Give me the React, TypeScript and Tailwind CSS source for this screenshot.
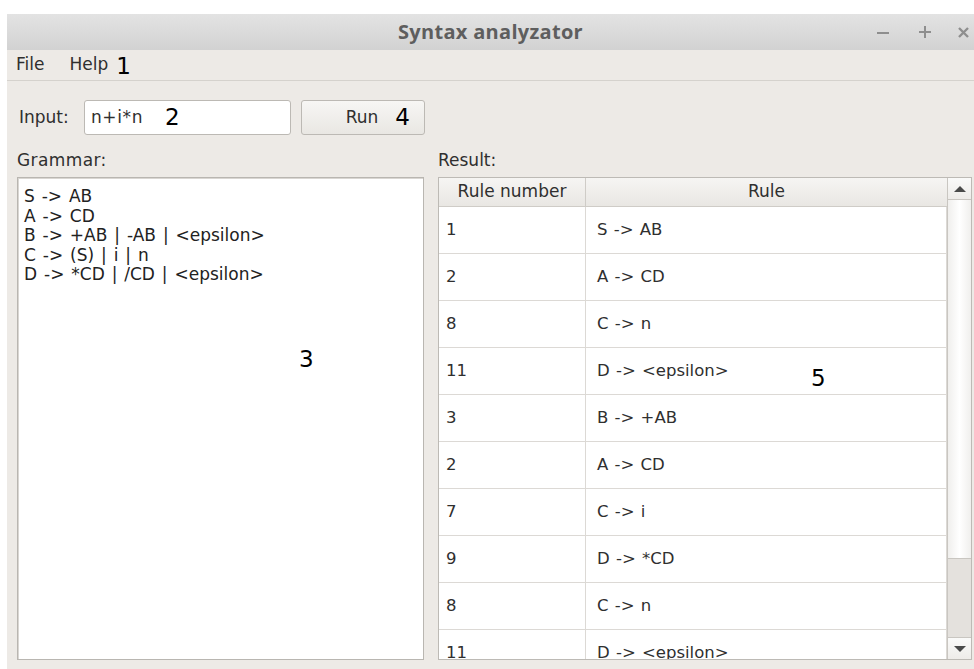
const grammar = [
  'S -> AB',
  'A -> CD',
  'B -> +AB | -AB | <epsilon>',
  'C -> (S) | i | n',
  'D -> *CD | /CD | <epsilon>',
]

const steps: [string, string][] = [
  ['1', 'S -> AB'],
  ['2', 'A -> CD'],
  ['8', 'C -> n'],
  ['11', 'D -> <epsilon>'],
  ['3', 'B -> +AB'],
  ['2', 'A -> CD'],
  ['7', 'C -> i'],
  ['9', 'D -> *CD'],
  ['8', 'C -> n'],
  ['11', 'D -> <epsilon>'],
]

// big black numbers pinned next to the widgets
function Mark({ n, className = '' }: { n: string; className?: string }) {
  return (
    <span className={`font-['DejaVu_Sans',sans-serif] text-[23px] leading-none text-black ${className}`}>
      {n}
    </span>
  )
}

function TitleBar() {
  return (
    <div className="relative h-[36px] shrink-0 flex items-center justify-center bg-gradient-to-b from-[#e3e3e3] to-[#d2d2d2]">
      <span className="font-['Open_Sans',sans-serif] font-bold text-[20px] tracking-[0.3px] text-[#5e5e5e]">
        Syntax analyzator
      </span>
      <div className="absolute right-[4px] top-0 h-full flex items-center text-[#8e8e8e]">
        <svg width="14" height="14" viewBox="0 0 14 14" className="mr-[28px]">
          <path d="M1 8h12" stroke="currentColor" strokeWidth="2" />
        </svg>
        <svg width="14" height="14" viewBox="0 0 14 14" className="mr-[25px]">
          <path d="M7 1v12M1 7h12" stroke="currentColor" strokeWidth="2" />
        </svg>
        <svg width="13" height="13" viewBox="0 0 13 13">
          <path d="M2 2l9 9M11 2l-9 9" stroke="currentColor" strokeWidth="2.4" />
        </svg>
      </div>
    </div>
  )
}

function Scrollbar() {
  return (
    <div className="w-[24px] shrink-0 flex flex-col border-l border-[#c9c6c1] bg-[#e4e1dd]">
      <div className="h-[22px] shrink-0 flex items-center justify-center bg-gradient-to-b from-[#fafaf9] to-[#eeece9] border-b border-[#c9c6c1]">
        <span className="w-0 h-0 border-l-[6px] border-r-[6px] border-b-[6px] border-l-transparent border-r-transparent border-b-[#4a4a4a]" />
      </div>
      <div className="h-[359px] shrink-0 bg-gradient-to-r from-[#f0efed] via-white to-[#f0efed] border-b border-[#c9c6c1]" />
      <div className="flex-1" />
      <div className="h-[22px] shrink-0 flex items-center justify-center bg-gradient-to-b from-[#fafaf9] to-[#eeece9] border-t border-[#c9c6c1]">
        <span className="w-0 h-0 border-l-[6px] border-r-[6px] border-t-[6px] border-l-transparent border-r-transparent border-t-[#4a4a4a]" />
      </div>
    </div>
  )
}

export default function App() {
  return (
    <div className="w-[974px] h-[669px] bg-white pt-[14px] pl-[7px] font-['DejaVu_Sans',sans-serif]">
      <div className="w-[967px] h-[655px] flex flex-col bg-[#edeae6] text-[#2f2f2f] overflow-hidden">
        <TitleBar />

        <div className="h-[31px] shrink-0 flex items-center gap-[25px] pl-[9px] border-b border-[#d5d2cd] text-[17px]">
          <span>File</span>
          <span className="flex items-end gap-[8px]">
            Help <Mark n="1" />
          </span>
        </div>

        <div className="flex-1 min-h-0 flex flex-col px-[10px] pb-[9px]">
          <div className="h-[35px] shrink-0 mt-[19px] flex items-center text-[17px]">
            <span className="ml-[2px] w-[65px]">Input:</span>
            <div className="w-[207px] h-[35px] flex items-center gap-[22px] px-[6px] bg-white border border-[#bcb9b4] rounded-[3px]">
              <span className="tracking-[0.6px]">n+i*n</span>
              <Mark n="2" />
            </div>
            <button className="ml-[10px] w-[124px] h-[35px] flex items-center justify-end gap-[17px] pr-[14px] bg-gradient-to-b from-[#f7f6f4] to-[#e9e7e3] border border-[#bcb9b4] rounded-[3px]">
              <span>Run</span>
              <Mark n="4" />
            </button>
          </div>

          <div className="h-[32px] shrink-0 mt-[10px] flex items-center text-[17px]">
            <span className="w-[421px] tracking-[0.4px]">Grammar:</span>
            <span>Result:</span>
          </div>

          <div className="flex-1 min-h-0 flex gap-[14px]">
            <div className="relative w-[407px] shrink-0 bg-white border border-[#b9b6b1] shadow-[inset_1px_1px_0_#d9d6d2] px-[6px] py-[9px] text-[#222]">
              {grammar.map((line) => (
                <div key={line} className="text-[17px] leading-[19.5px] [word-spacing:1.5px]">
                  {line}
                </div>
              ))}
              <Mark n="3" className="absolute left-[281px] top-[170px]" />
            </div>

            <div className="w-[534px] shrink-0 flex border border-[#bdbab5] overflow-hidden">
              <div className="flex-1 min-w-0 flex flex-col overflow-hidden">
                <div className="h-[29px] shrink-0 flex bg-gradient-to-b from-[#f6f5f3] to-[#e9e7e3] border-b border-[#cfccc7] text-[17px]">
                  <div className="w-[147px] flex items-center justify-center border-r border-[#cfccc7]">
                    Rule number
                  </div>
                  <div className="flex-1 flex items-center justify-center">Rule</div>
                </div>
                <div className="relative flex-1 min-h-0 overflow-hidden bg-white text-[16.5px]">
                  {steps.map(([num, rule], i) => (
                    <div key={i} className="h-[47px] flex border-b border-[#dcd9d5]">
                      <div className="w-[147px] flex items-center pl-[7px] border-r border-[#dcd9d5]">{num}</div>
                      <div className="flex-1 flex items-center pl-[11px] border-r border-[#dcd9d5] [word-spacing:1px]">
                        {rule}
                      </div>
                    </div>
                  ))}
                  <Mark n="5" className="absolute left-[372px] top-[160px]" />
                </div>
              </div>
              <Scrollbar />
            </div>
          </div>
        </div>
      </div>
    </div>
  )
}
